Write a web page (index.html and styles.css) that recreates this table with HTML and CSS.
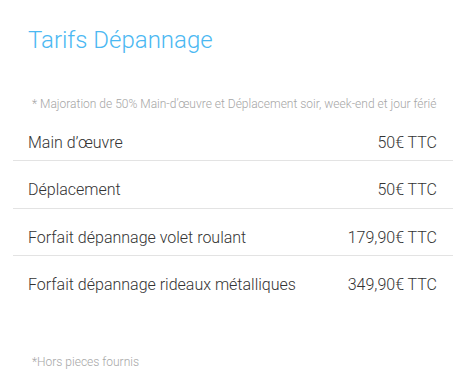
FILE: index.html
```html
<!DOCTYPE html>
<html lang="fr">
<head>
<meta charset="utf-8">
<link rel="stylesheet" href="styles.css">
</head>
<body>
<div class="page">
  <h1 class="title">Tarifs Dépannage</h1>
  <p class="note note-top">* Majoration de 50% Main-d’œuvre et Déplacement soir, week-end et jour férié</p>
  <div class="prices">
    <div class="row"><span class="label">Main d’œuvre</span><span class="price">50€ TTC</span></div>
    <div class="row"><span class="label">Déplacement</span><span class="price">50€ TTC</span></div>
    <div class="row"><span class="label">Forfait dépannage volet roulant</span><span class="price">179,90€ TTC</span></div>
    <div class="row"><span class="label">Forfait dépannage rideaux métalliques</span><span class="price">349,90€ TTC</span></div>
  </div>
  <p class="note note-bottom">*Hors pieces fournis</p>
</div>
</body>
</html>
```

FILE: styles.css
```css
html, body {
  margin: 0;
  padding: 0;
  background: #ffffff;
}
body {
  font-family: Roboto, "Liberation Sans", sans-serif;
  font-weight: 300;
  color: #333333;
}
.page {
  padding: 26px 15px 0 13px;
}
.title {
  margin: 0 0 0 15px;
  font-size: 24px;
  line-height: 28px;
  font-weight: 300;
  color: #4bb8f2;
}
.note {
  margin: 0;
  font-size: 12px;
  line-height: 16px;
  color: #a6a6a6;
  padding-left: 19px;
}
.note-top {
  margin-top: 42px;
}
.prices {
  margin-top: 1.5px;
}
.row {
  display: flex;
  justify-content: space-between;
  padding: 17px 16px 5.5px 15px;
  font-size: 16px;
  line-height: 24px;
  border-bottom: 1px solid #e3e3e3;
}
.row:last-child {
  border-bottom: none;
}
.note-bottom {
  margin-top: 51px;
}
```
